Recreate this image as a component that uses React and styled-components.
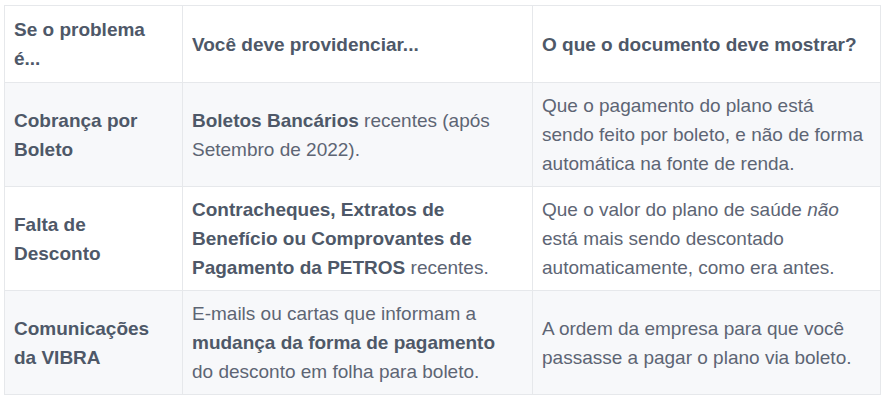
import React from 'react';
import styled, { createGlobalStyle } from 'styled-components';

const GlobalStyle = createGlobalStyle`
  body {
    margin: 0;
    background: #ffffff;
    font-family: "Liberation Sans", Arial, sans-serif;
  }
`;

const Page = styled.div`
  padding: 5px 0 0 4px;
`;

const Table = styled.table`
  width: 876px;
  border-collapse: collapse;
  table-layout: fixed;
  font-size: 19px;
  line-height: 29px;
  color: #5d6574;
`;

const HeadCell = styled.th`
  box-sizing: border-box;
  width: ${({ $w }) => $w}px;
  padding: 9px 14px 9px 9px;
  border: 1px solid #e6e8eb;
  text-align: left;
  vertical-align: middle;
  font-weight: bold;
  color: #4e5868;
`;

const Row = styled.tr`
  background: ${({ $shade }) => ($shade ? '#f7f8fa' : '#ffffff')};
`;

const Cell = styled.td`
  box-sizing: border-box;
  padding: 8px 16px 8px 9px;
  border: 1px solid #e6e8eb;
  vertical-align: middle;
`;

const Label = styled(Cell)`
  font-weight: bold;
  color: #4e5868;
`;

const Strong = styled.strong`
  color: #4e5868;
`;

const rows = [
  {
    label: 'Cobrança por Boleto',
    doc: (
      <>
        <Strong>Boletos Bancários</Strong> recentes (após Setembro de 2022).
      </>
    ),
    show: 'Que o pagamento do plano está sendo feito por boleto, e não de forma automática na fonte de renda.',
  },
  {
    label: 'Falta de Desconto',
    doc: (
      <>
        <Strong>Contracheques, Extratos de Benefício ou Comprovantes de Pagamento da PETROS</Strong> recentes.
      </>
    ),
    show: (
      <>
        Que o valor do plano de saúde <em>não</em> está mais sendo descontado automaticamente, como era antes.
      </>
    ),
  },
  {
    label: 'Comunicações da VIBRA',
    doc: (
      <>
        E-mails ou cartas que informam a <Strong>mudança da forma de pagamento</Strong> do desconto em folha para boleto.
      </>
    ),
    show: 'A ordem da empresa para que você passasse a pagar o plano via boleto.',
  },
];

export default function App() {
  return (
    <Page>
      <GlobalStyle />
      <Table>
        <thead>
          <Row>
            <HeadCell $w={178}>Se o problema é...</HeadCell>
            <HeadCell $w={350}>Você deve providenciar...</HeadCell>
            <HeadCell $w={348}>O que o documento deve mostrar?</HeadCell>
          </Row>
        </thead>
        <tbody>
          {rows.map((r, i) => (
            <Row key={r.label} $shade={i % 2 === 0}>
              <Label>{r.label}</Label>
              <Cell>{r.doc}</Cell>
              <Cell>{r.show}</Cell>
            </Row>
          ))}
        </tbody>
      </Table>
    </Page>
  );
}
